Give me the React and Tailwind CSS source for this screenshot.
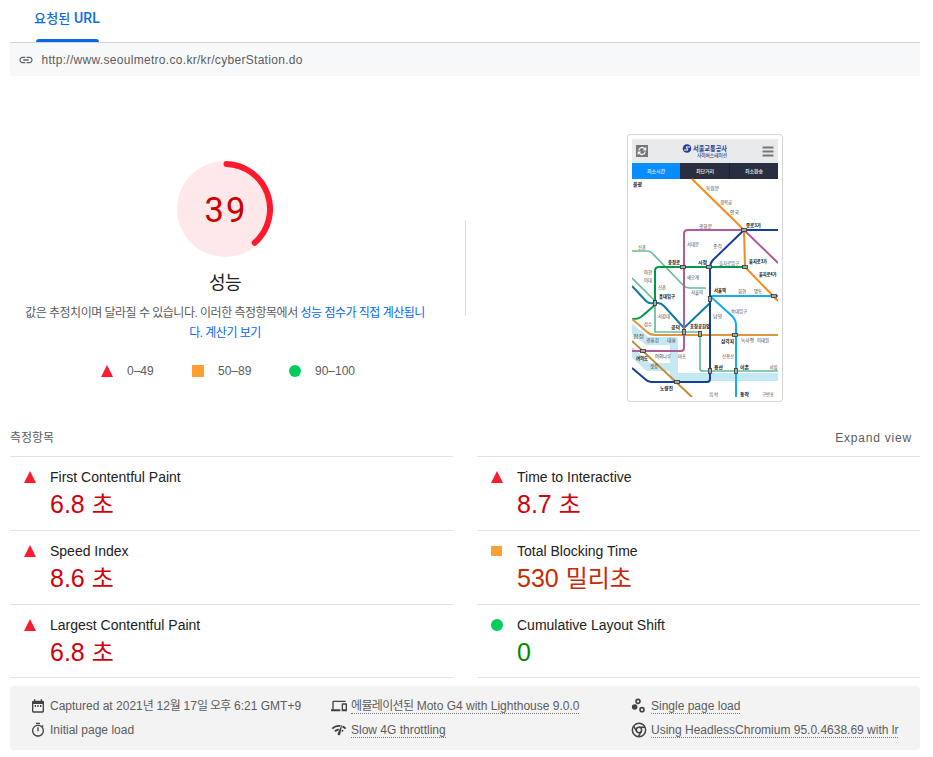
import React from "react";

const KR = "font-['Liberation_Sans','Noto_Sans_CJK_KR',sans-serif]";

function Mark({ kind }) {
  if (kind === "fail") return <svg className="block size-3" viewBox="0 0 12 12"><path d="M6 0l6 12H0z" fill="#ff1b2d" /></svg>;
  if (kind === "average") return <span className="block h-[10px] w-[11px] bg-[#ffa030]" />;
  return <span className="block size-3 rounded-full bg-[#00cc5c]" />;
}

const left = [
  ["fail", "First Contentful Paint", "6.8 ", "초", "text-[#d2000b]"],
  ["fail", "Speed Index", "8.6 ", "초", "text-[#d2000b]"],
  ["fail", "Largest Contentful Paint", "6.8 ", "초", "text-[#d2000b]"],
];
const right = [
  ["fail", "Time to Interactive", "8.7 ", "초", "text-[#d2000b]"],
  ["average", "Total Blocking Time", "530 ", "밀리초", "text-[#c62b08]"],
  ["pass", "Cumulative Layout Shift", "0", "", "text-[#008a00]"],
];

function Metrics({ items }) {
  return (
    <div className="flex-1 border-b border-[#e3e3e3]">
      {items.map(([kind, title, value, unit, color], i) => (
        <div key={title} className={"flex border-t border-[#e3e3e3] " + (i === 2 ? "h-[73px]" : "h-[74px]")}>
          <div className="flex h-[40px] w-10 shrink-0 items-center pl-[14px]"><Mark kind={kind} /></div>
          <div>
            <div className="mt-[10px] h-5 text-[14px] leading-5 text-[#212121]">{title}</div>
            <div className={"h-9 text-[25px] leading-[34px] whitespace-pre " + color}>{value}<span className="text-[24px]">{unit}</span></div>
          </div>
        </div>
      ))}
    </div>
  );
}

const labels = [
  [633, 186, 9, "불광", 1], [706, 190, 13, "독립문"], [720, 204, 12, "경복궁"], [730, 214, 9, "안국"],
  [699, 228, 13, "광화문"], [746, 227, 15, "종로3가", 1], [687, 246, 12, "서대문"], [713, 248, 9, "종각"],
  [638, 249, 8, "신촌"], [668, 264, 12, "충정로", 1], [698, 264, 9, "시청", 1], [719, 265, 20, "을지로입구"],
  [749, 263, 18, "을지로3가", 1], [759, 275.5, 17.5, "을지로4가", 1], [644, 274, 8, "아현"], [644, 282, 8, "이대"],
  [687, 279, 12, "애오개"], [658, 289, 8, "신촌"], [659, 298, 16, "홍대입구", 1], [691, 294, 12, "서울역"],
  [714, 292, 12, "서울역", 1], [738, 293, 8, "회현"], [754, 293, 8, "명동"], [658, 318, 12, "서강대"],
  [713, 318, 9, "남영"], [731, 313, 16, "숙대입구"], [644, 326, 8, "상수"], [671, 329, 9, "공덕", 1],
  [690, 328, 20, "효창공원앞", 1], [633, 338, 11, "합정"], [646, 342, 13, "광흥창"], [667, 342, 9, "대흥"],
  [721, 343, 13, "삼각지", 1], [741, 342, 13, "녹사평"], [757, 342, 12, "이태원"], [636, 360, 12, "여의도", 1],
  [655, 358, 16, "여의나루"], [678, 358, 8, "마포"], [722, 358, 12, "신용산"], [650, 368, 8, "샛강"],
  [714, 369, 9, "용산", 1], [740, 369, 9, "이촌", 1], [769.5, 369, 8, "서빙"], [660, 390, 13, "노량진", 1],
  [709, 396.3, 9, "흑석"], [740, 396.3, 9, "동작", 1], [762, 396.3, 12, "구반포"],
];

const stations = [[744, 230], [745, 267], [683, 267], [709, 267], [655, 303, 1], [710, 299, 1], [774, 296], [684, 332, 1], [700, 334, 1], [735, 335], [643, 351], [710, 371, 1], [736, 371, 1], [677, 382]];

function MetroMap() {
  return (
    <svg className="block h-[258px] w-[146px]" viewBox="632 139 146 258" fontFamily="'Noto Sans CJK KR', sans-serif">
      <path fill="#fff" d="M632 139h146v258H632z" />
      <path fill="#e9eaec" d="M632 139h146v24H632z" />
      <path fill="#292f40" d="M632 163h146v16H632z" />
      <path fill="#078dff" d="M632 163h48v16h-48z" />
      <path stroke="#1d2231" d="M729.5 163v16" />
      <path fill="#777" d="M636 145h12v12h-12z" />
      <path d="M638.700 150.500a3.400 3.400 0 0 1 6-1.700M645.300 151.500a3.400 3.400 0 0 1-6 1.700" fill="none" stroke="#f2f2f2" strokeWidth="1.300" />
      <path d="M646.300 146.800v3.700h-3.700zM637.700 155.200v-3.700h3.700z" fill="#f2f2f2" />
      <path d="M762.500 147.500h11m-11 4h11m-11 4h11" stroke="#777" strokeWidth="2" />
      <circle cx="687" cy="148.500" r="4.300" fill="#253d98" />
      <path d="M684 150h4l-2-3h4" fill="none" stroke="#fff" strokeWidth="1" />
      <g fill="#273c91" fontWeight="700">
        <text x="693" y="150.700" fontSize="6.500" textLength="34" lengthAdjust="spacingAndGlyphs">서울교통공사</text>
        <text x="697" y="157" fontSize="4.500" fontWeight="500" textLength="30" lengthAdjust="spacingAndGlyphs">사이버스테이션</text>
      </g>
      <g fill="#e9f0f8" fontSize="5" fontWeight="500">
        <text x="647" y="173" textLength="18">최소시간</text><text x="696" y="173" textLength="18">최단거리</text><text x="745" y="173" textLength="18">최소환승</text>
      </g>
      <g fill="none" stroke="#c5e8f5" strokeWidth="8" strokeLinejoin="round">
        <path d="M630 327l17 14h27v36h106M630 350l18 17h26" />
      </g>
      <g fill="none" strokeWidth="2" strokeLinejoin="round">
        <path stroke="#66bc98" strokeWidth="1.700" d="M632 251h15q3 0 5 2l31 32q3 3 7 3h16M632 278l23 23v31h45v37q0 2 3 2h75" />
        <path stroke="#0a7e9d" d="M632 286l14 15q3 3 8 2h4q3 0 6 3l20 22 26-25" />
        <path stroke="#00984a" d="M745 267h-86q-4 0-4 4v34l-14 12q-3 2-9 2" />
        <path stroke="#de963f" d="M632 319l15 13q3 3 8 3h123" />
        <path stroke="#b15b9b" d="M632 351h49q3 0 3-3V234q0-4 4-4h56l34 33" />
        <path stroke="#13aced" d="M778 296h-68l22 20q4 4 4 9v72" />
        <path stroke="#173e9c" d="M778 230h-34l-31 30q-3 3-3 8v111q0 3-3 3h-56q-3 0-6-3l-13-11" />
        <path stroke="#bd8d32" d="M632 341l60 56" />
        <path stroke="#f58b18" d="M692 179l52 51 1 37 33 34" />
      </g>
      {stations.map(([x, y, v]) => <rect key={x + "-" + y} x={x - (v ? 1.5 : 2.5)} y={y - (v ? 2.5 : 1.5)} width={v ? 3 : 5} height={v ? 5 : 3} fill="#aaa" stroke="#333" strokeWidth=".8" />)}
      {labels.map(([x, y, w, t, b]) => <text key={t + x} x={x} y={y} fontSize="5" textLength={w} lengthAdjust="spacingAndGlyphs" fill={b ? "#111" : "#444"} fontWeight={b ? 700 : 400}>{t}</text>)}
    </svg>
  );
}

const icons = {
  date: <path d="M19 4h-1V2h-2v2H8V2H6v2H5a2 2 0 0 0-2 2v14a2 2 0 0 0 2 2h14a2 2 0 0 0 2-2V6a2 2 0 0 0-2-2zm0 16H5V9h14v11zM7 10.500h2v3H7zm4 0h2v3h-2zm4 0h2v3h-2z" />,
  timer: <path d="M15 1H9v2h6V1zm-4 13h2V8h-2v6zm8.030-6.610l1.420-1.420c-.43-.51-.9-.99-1.410-1.410l-1.420 1.420C16.070 4.740 14.120 4 12 4c-4.970 0-9 4.030-9 9s4.020 9 9 9 9-4.030 9-9c0-2.120-.74-4.070-1.970-5.610zM12 20c-3.870 0-7-3.130-7-7s3.130-7 7-7 7 3.130 7 7-3.130 7-7 7z" />,
  devices: <path d="M4 6h18V4H4c-1.100 0-2 .9-2 2v11H0v3h14v-3H4V6zm19 2h-6c-.55 0-1 .45-1 1v10c0 .55.45 1 1 1h6c.55 0 1-.45 1-1V9c0-.55-.45-1-1-1zm-1 9h-4v-7h4v7z" />,
  network: <path d="M15.900 5c-.17 0-.32.09-.41.23l-.07.15-5.180 11.650c-.16.29-.26.61-.26.96 0 1.110.9 2.010 2.010 2.010.96 0 1.770-.68 1.960-1.590l.01-.03L16.400 5.500c0-.28-.22-.5-.5-.5zM1 9l2 2c2.880-2.880 6.790-4.080 10.530-3.620l1.190-2.680C9.890 3.840 4.740 5.270 1 9zm20 2l2-2c-1.640-1.640-3.550-2.820-5.590-3.570l-.53 2.820c1.500.62 2.900 1.530 4.120 2.750zm-4 4l2-2c-.8-.8-1.700-1.420-2.660-1.890l-.55 2.920c.42.27.83.59 1.210.97zM5 13l2 2c1.130-1.130 2.560-1.790 4.030-2l1.280-2.880c-2.630-.08-5.300.87-7.310 2.880z" />,
  samples: <><circle cx="5.500" cy="13.500" r="4.200" /><g fill="none" stroke="currentColor" strokeWidth="2.400"><circle cx="10.500" cy="5" r="3" /><circle cx="16.500" cy="17.500" r="3" /></g></>,
  chrome: <g fill="none" stroke="currentColor" strokeWidth="2.200"><circle cx="12" cy="12" r="10" /><circle cx="12" cy="12" r="4" /><path d="M12 8h9M8.500 14L4 6.300M15.500 14L11 22" /></g>,
};

function Info({ icon, children, link }) {
  return (
    <div className="flex h-6 items-center">
      <svg className="mr-1 size-4 shrink-0 text-[#424242]" viewBox="0 0 24 24" fill="currentColor">{icons[icon]}</svg>
      <span className={"h-[15px] whitespace-nowrap text-[12px] leading-[15px]" + (link ? " border-b border-dotted border-[#757575]" : "")}>{children}</span>
    </div>
  );
}

const Ko = ({ children }) => <span className="tracking-[-0.65px]">{children}</span>;

export default function App() {
  return (
    <div className={"h-[757px] w-[933px] overflow-hidden bg-white pr-[13px] pl-[10px] text-[#5c5c5c] " + KR}>
      <div className="flex h-[43px] flex-col justify-between border-b border-[#d5d5d8] pl-6">
        <div className="mt-2 h-5 text-[13px] leading-5 font-medium tracking-[0.2px] text-[#0d68e8] font-['Roboto','Noto_Sans_CJK_KR',sans-serif]">요청된 <span className="text-[14px]">URL</span></div>
        <div className="ml-[2px] h-[3px] w-[63px] rounded-t-[3px] bg-[#0b66e4]" />
      </div>
      <div className="flex h-[33px] items-center bg-[#f7f8fa] pl-2">
        <svg className="size-4" viewBox="0 0 24 24" fill="#5f6368"><path d="M3.900 12c0-1.710 1.390-3.100 3.100-3.100h4V7H7c-2.760 0-5 2.240-5 5s2.240 5 5 5h4v-1.900H7c-1.710 0-3.100-1.390-3.100-3.100zM8 13h8v-2H8v2zm9-6h-4v1.900h4c1.710 0 3.100 1.390 3.100 3.100s-1.390 3.100-3.100 3.100h-4V17h4c2.760 0 5-2.240 5-5s-2.240-5-5-5z" /></svg>
        <span className="ml-[7.5px] text-[12px] leading-4 tracking-[0.3px]">http://www.seoulmetro.co.kr/kr/cyberStation.do</span>
      </div>
      <div className="flex h-[352px]">
        <div className="flex w-[430px] flex-col items-center pt-[85px]">
          <svg className="size-24" viewBox="0 0 96 96">
            <circle cx="48" cy="48" r="48" fill="#ffe8ea" />
            <path d="M49.500 3A45 45 0 0 1 77.700 81.800" fill="none" stroke="#ff1b2d" strokeWidth="6" strokeLinecap="round" />
            <text x="49" y="61" textAnchor="middle" fontFamily="Roboto, sans-serif" fontSize="34.500" letterSpacing="2" fill="#cc0000">39</text>
          </svg>
          <div className="mt-3 h-7 text-[18px] leading-7 tracking-[-0.5px] text-[#212121]">성능</div>
          <div className="mt-[6px] text-center text-[12px] leading-5 tracking-[-0.51px] whitespace-nowrap">
            <div>값은 추정치이며 달라질 수 있습니다. 이러한 측정항목에서 <span className="text-[#0667f5]">성능 점수가 직접 계산됩니</span></div>
            <div><span className="text-[#0667f5]">다</span>. <span className="text-[#0667f5]">계산기 보기</span></div>
          </div>
          <div className="mt-[18px] flex h-5 w-full items-center pl-[91px] text-[12px]">
            <div className="flex w-[91px] items-center gap-[14px]"><Mark kind="fail" />0–49</div>
            <div className="flex w-[97px] items-center gap-[14px]"><span className="size-3 bg-[#ffa030]" />50–89</div>
            <div className="flex items-center gap-[14px]"><Mark kind="pass" />90–100</div>
          </div>
        </div>
        <div className="mt-[144px] ml-[25px] h-[96px] w-px bg-[#dedede]" />
        <div className="mt-[58px] ml-[161px] h-[268px] w-[156px] rounded-[3px] border border-[#d5d5d5] p-1"><MetroMap /></div>
      </div>
      <div className="flex h-7 items-start justify-between text-[12px] leading-5">
        <span>측정항목</span><span className="mr-2 tracking-[0.8px]">Expand view</span>
      </div>
      <div className="flex gap-6"><Metrics items={left} /><Metrics items={right} /></div>
      <div className="mt-2 grid h-16 grid-cols-[301px_300px_1fr] rounded-[4px] bg-[#f3f3f3] px-5 py-2">
        <div><Info icon="date">Captured at 2021<Ko>년</Ko> 12<Ko>월</Ko> 17<Ko>일 오후</Ko> 6:21 GMT+9</Info><Info icon="timer">Initial page load</Info></div>
        <div><Info icon="devices" link><Ko>에뮬레이션된</Ko> Moto G4 with Lighthouse 9.0.0</Info><Info icon="network" link>Slow 4G throttling</Info></div>
        <div><Info icon="samples" link>Single page load</Info><Info icon="chrome" link>Using HeadlessChromium 95.0.4638.69 with lr</Info></div>
      </div>
    </div>
  );
}
